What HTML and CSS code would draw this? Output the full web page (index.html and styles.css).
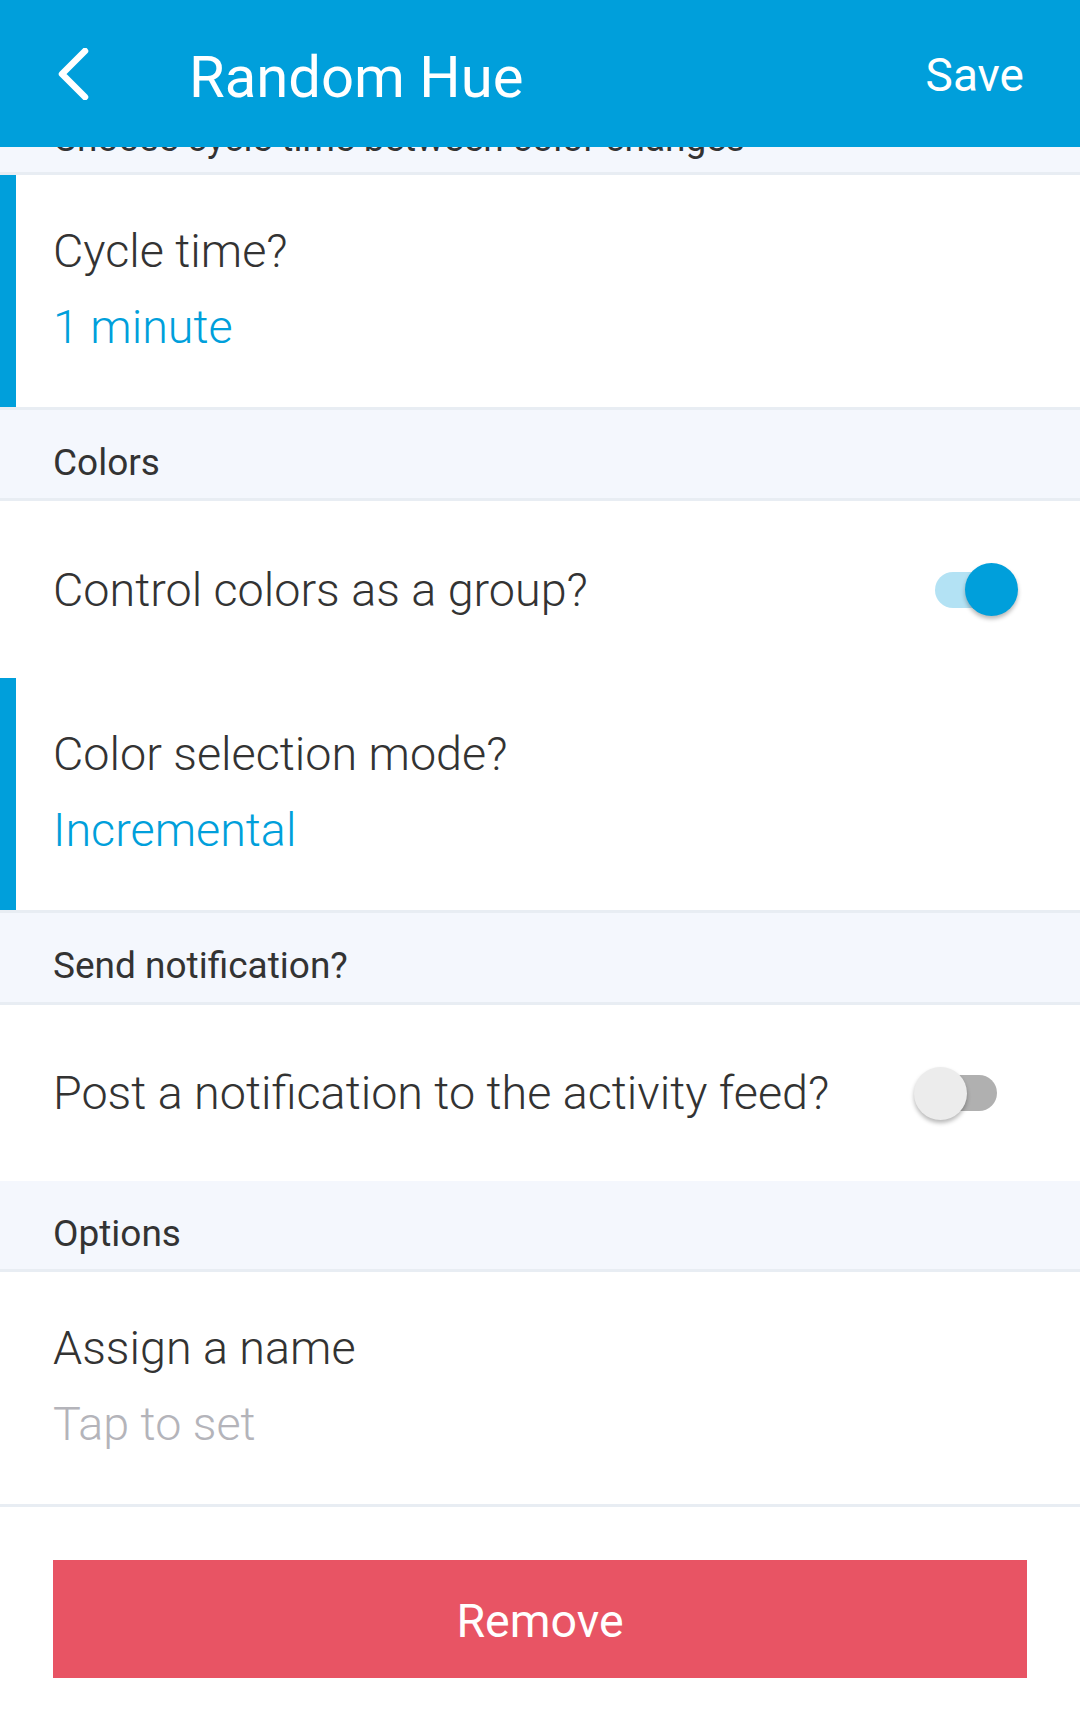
FILE: index.html
```html
<!DOCTYPE html>
<html lang="en">
<head>
<meta charset="utf-8">
<title>Random Hue</title>
<link rel="stylesheet" href="styles.css">
</head>
<body>
<header class="appbar">
  <svg class="back" width="40" height="52" viewBox="0 0 40 52" aria-hidden="true">
    <path d="M30 3 L7 26 L30 49" fill="none" stroke="#fff" stroke-width="6.5" stroke-linecap="round" stroke-linejoin="round"/>
  </svg>
  <h1 class="title">Random Hue</h1>
  <span class="save">Save</span>
</header>

<div class="strip"><span class="strip-text">Choose cycle time between color changes</span></div>

<div class="row two marked bordered">
  <div class="label">Cycle time?</div>
  <div class="value">1 minute</div>
</div>

<div class="section">Colors</div>

<div class="row toggle-row">
  <div class="label">Control colors as a group?</div>
  <div class="switch on"><span class="thumb"></span></div>
</div>

<div class="row two marked bordered">
  <div class="label">Color selection mode?</div>
  <div class="value">Incremental</div>
</div>

<div class="section tall">Send notification?</div>

<div class="row toggle-row short">
  <div class="label">Post a notification to the activity feed?</div>
  <div class="switch off"><span class="thumb"></span></div>
</div>

<div class="section">Options</div>

<div class="row two bordered">
  <div class="label">Assign a name</div>
  <div class="value placeholder">Tap to set</div>
</div>

<div class="actions">
  <button class="remove">Remove</button>
</div>
</body>
</html>
```

FILE: styles.css
```css
html, body {
  margin: 0;
  padding: 0;
  background: #ffffff;
}
body {
  width: 1080px;
  font-family: Roboto, "Noto Sans", "Liberation Sans", sans-serif;
  color: #333333;
}

.appbar {
  height: 147px;
  background: #009fdb;
  display: flex;
  align-items: flex-start;
  color: #ffffff;
}
.back {
  display: block;
  margin-left: 55px;
  margin-top: 48px;
}
.title {
  margin: 48px 0 0 94px;
  font-size: 58px;
  line-height: 58px;
  font-weight: 400;
}
.save {
  margin: 52px 56px 0 auto;
  font-size: 46px;
  line-height: 46px;
  font-weight: 400;
}

.strip {
  height: 25px;
  overflow: hidden;
  background: #f4f7fd;
  border-bottom: 3px solid #e8edf3;
  padding-left: 53px;
}
.strip-text {
  display: block;
  margin-top: -27px;
  font-size: 37px;
  line-height: 37px;
  color: #333333;
}

.section {
  height: 40px;
  padding: 33px 0 15px 53px;
  background: #f4f7fd;
  border-bottom: 3px solid #e8edf3;
  font-size: 37px;
  line-height: 40px;
  font-weight: 400;
  color: #333333;
}
.section.tall {
  padding-bottom: 16px;
}

.row {
  background: #ffffff;
  padding-left: 53px;
  font-size: 46.7px;
  font-weight: 300;
}
.row.two {
  padding-top: 38px;
  padding-bottom: 42px;
  line-height: 76px;
}
.row.bordered {
  border-bottom: 3px solid #e8edf3;
}
.row.marked {
  box-shadow: inset 16px 0 0 #009fdb;
}
.label {
  color: #333333;
}
.value {
  color: #009fdb;
}
.value.placeholder {
  color: #b4b4ba;
}

.toggle-row {
  height: 177px;
  display: flex;
  align-items: center;
  justify-content: space-between;
  line-height: 52px;
}
.toggle-row.short {
  height: 176px;
}

.switch {
  position: relative;
  width: 62px;
  height: 36px;
  border-radius: 18px;
  margin-right: 83px;
  flex: none;
}
.switch.on {
  background: #b3e2f4;
}
.switch.off {
  background: #b0b0b0;
}
.thumb {
  position: absolute;
  top: -8.5px;
  width: 53px;
  height: 53px;
  border-radius: 50%;
  box-shadow: 0 3px 4px rgba(0, 0, 0, 0.28);
}
.switch.on .thumb {
  left: 29.5px;
  background: #009fdb;
}
.switch.off .thumb {
  left: -21.5px;
  background: #ececec;
}

.actions {
  padding: 53px 53px 0 53px;
}
.remove {
  display: block;
  width: 974px;
  height: 118px;
  border: none;
  border-radius: 0;
  background: #e85464;
  color: #ffffff;
  font-family: Roboto, "Noto Sans", "Liberation Sans", sans-serif;
  font-size: 46.5px;
  font-weight: 400;
  padding: 4px 0 0 0;
}
```
